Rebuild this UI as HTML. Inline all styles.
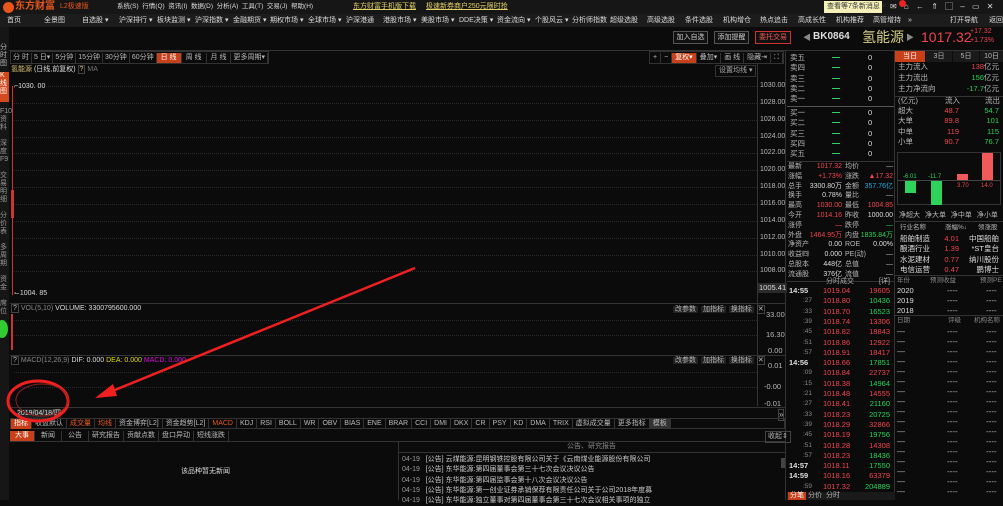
<!DOCTYPE html>
<html><head><meta charset="utf-8"><style>
*{margin:0;padding:0;box-sizing:border-box}
body{width:1003px;height:500px;overflow:hidden;background:#0b0b0b;font-family:"Liberation Sans","Noto Sans CJK SC",sans-serif;font-size:8px;color:#b8b8b8;position:relative}
.a{position:absolute;white-space:nowrap;line-height:10px}
.r{color:#f0454f}.g{color:#27d35a}.w{color:#ddd}.y{color:#d8c070}
.hl{position:absolute;height:1px;background:#2c2c2c}
.vl{position:absolute;width:1px;background:#2c2c2c}
.btn{position:absolute;border:1px solid #555;color:#ccc;text-align:center;line-height:11px;font-size:8px;background:#111}
.dot{position:absolute;height:0;border-top:1px dotted #2a2a2a}
.tab{display:inline-block;border-right:1px solid #333;padding:0 3px;line-height:10px;height:10px;color:#bbb}
.nv{position:absolute;top:16px;font-size:7px;line-height:10px;color:#ddd;white-space:nowrap}
</style></head><body>
<!-- title bar -->
<div class="a" style="left:0;top:0;width:1003px;height:14px;background:#161616"></div>
<div class="a" style="left:3px;top:2px;width:11px;height:11px;border-radius:50%;background:#e8561c"></div>
<div class="a" style="left:15px;top:1px;font-size:10px;font-weight:bold;color:#e8561c;line-height:12px">东方财富</div>
<div class="a" style="left:60px;top:2px;font-size:7px;color:#e8561c">L2极速版</div>
<div class="a w" style="left:117px;top:2px;font-size:6.5px">系统(S)&nbsp; 行情(Q)&nbsp; 资讯(I)&nbsp; 数据(D)&nbsp; 分析(A)&nbsp; 工具(T)&nbsp; 交易(J)&nbsp; 帮助(H)</div>
<div class="a" style="left:353px;top:2px;font-size:7px;color:#e6d36a;text-decoration:underline">东方财富手机版下载</div>
<div class="a" style="left:426px;top:2px;font-size:7px;color:#e6d36a;text-decoration:underline">极速新券商户250元限时抢</div>
<div class="a" style="left:824px;top:1px;width:58px;height:12px;background:#f4f0b8;color:#333;padding-left:3px;line-height:12px;font-size:7px">查看等7条新消息 ×</div>
<div class="a w" style="left:890px;top:2px;word-spacing:5px">✉ ⌂ ← ⇑ ▢ – ▭ ✕</div>
<div class="a" style="left:899px;top:0;width:7px;height:7px;border-radius:50%;background:#e22"></div>
<!-- nav -->
<div class="a" style="left:0;top:14px;width:1003px;height:13px;background:#1c1c1c"></div>
<div class="nv" style="left:7px">首页</div><div class="nv" style="left:44px">全景图</div><div class="nv" style="left:82px">自选股 ▾</div><div class="nv" style="left:119px">沪深排行 ▾</div><div class="nv" style="left:157px">板块监测 ▾</div><div class="nv" style="left:195px">沪深指数 ▾</div><div class="nv" style="left:233px">金融期货 ▾</div><div class="nv" style="left:270px">期权市场 ▾</div><div class="nv" style="left:308px">全球市场 ▾</div><div class="nv" style="left:346px">沪深港通</div><div class="nv" style="left:383px">港股市场 ▾</div><div class="nv" style="left:421px">美股市场 ▾</div><div class="nv" style="left:459px">DDE决策 ▾</div><div class="nv" style="left:497px">资金流向 ▾</div><div class="nv" style="left:535px">个股风云 ▾</div><div class="nv" style="left:572px">分析师指数</div><div class="nv" style="left:610px">超级选股</div><div class="nv" style="left:647px">高级选股</div><div class="nv" style="left:685px">条件选股</div><div class="nv" style="left:723px">机构增仓</div><div class="nv" style="left:760px">热点追击</div><div class="nv" style="left:798px">高成长性</div><div class="nv" style="left:836px">机构推荐</div><div class="nv" style="left:873px">高管增持</div><div class="nv" style="left:908px">»</div><div class="nv" style="left:950px">打开导航</div><div class="nv" style="left:989px">返回</div>
<!-- toolbar -->
<div class="btn" style="left:673px;top:31px;width:35px;height:13px;font-size:7px">加入自选</div>
<div class="btn" style="left:714px;top:31px;width:35px;height:13px;font-size:7px">添加提醒</div>
<div class="btn" style="left:755px;top:31px;width:36px;height:13px;border-color:#c33;color:#e55;font-size:7px">委托交易</div>
<div class="a" style="left:803px;top:33px;color:#888">◀</div>
<div class="a w" style="left:813px;top:32px;font-size:10px;font-weight:bold">BK0864</div>
<div class="a" style="left:862px;top:29px;font-size:14px;line-height:16px;color:#d8d08a">氢能源</div>
<div class="a" style="left:906px;top:33px;color:#888">▶</div>
<div class="a r" style="left:921px;top:29px;font-size:14px;line-height:16px">1017.32</div>
<div class="a r" style="left:970px;top:27px;font-size:7px;line-height:9px">+17.32<br>+1.73%</div>
<div class="hl" style="left:0;top:50px;width:1003px;background:#333"></div>
<!-- left sidebar -->
<div class="a" style="left:0;top:27px;width:9px;height:473px;background:#161616"></div>
<div class="a" style="left:0;top:44px;font-size:7px;line-height:8px;width:9px;white-space:normal">分时图</div>
<div class="a" style="left:0;top:72px;width:9px;height:30px;background:#d24a1c;color:#fff;font-size:7px;line-height:8px;white-space:normal">K线图</div>
<div class="a" style="left:0;top:108px;font-size:7px;line-height:8px;width:9px;white-space:normal;color:#999">F10资料<br><br>深度F9<br><br>交易明细<br><br>分价表<br><br>多周期<br><br>资金<br><br>席位</div>
<div class="a" style="left:-4px;top:320px;width:12px;height:18px;border-radius:50%;background:#3c3"></div>
<!-- period bar -->
<div class="a" style="left:10px;top:51px;height:13px;border:1px solid #333;font-size:7px;line-height:11px">
<span class="tab" style="padding:0 2px">分 时</span><span class="tab" style="padding:0 2px">5 日▾</span><span class="tab" style="padding:0 2px">5分钟</span><span class="tab" style="padding:0 2px">15分钟</span><span class="tab" style="padding:0 2px">30分钟</span><span class="tab" style="padding:0 2px">60分钟</span><span class="tab" style="background:#c8401a;color:#fff;padding:0 4px">日 线</span><span class="tab" style="padding:0 4px">周 线</span><span class="tab" style="padding:0 4px">月 线</span><span class="tab" style="padding:0 2px">更多周期▾</span></div>
<div class="a" style="left:649px;top:51px;height:13px;border:1px solid #333;line-height:11px;font-size:7px"><span class="tab">+</span><span class="tab">−</span><span class="tab" style="background:#c8401a;color:#fff">复权▾</span><span class="tab">叠加▾</span><span class="tab">画 线</span><span class="tab">隐藏⇥</span><span class="tab">⛶</span></div>
<div class="a y" style="left:11px;top:65px;font-size:7px">氢能源 <span class="w">(日线,前复权)</span> <span style="border:1px solid #444;padding:0 1px">?</span> <span style="color:#777">MA</span></div>
<div class="a" style="left:715px;top:65px;border:1px solid #333;padding:0 3px;color:#aaa;font-size:7px">设置均线 ▾</div>
<!-- main chart -->
<div class="vl" style="left:757px;top:64px;height:342px;background:#333"></div>
<div class="vl" style="left:785px;top:50px;height:450px;background:#333"></div>
<div id="grid"></div>
<div class="a" style="left:12px;top:86px;width:1px;height:209px;background:#c33"></div>
<div class="a" style="left:11px;top:190px;width:3px;height:28px;border:1px solid #c33"></div>
<div class="a w" style="left:14px;top:82px;font-size:7px">⌐1030. 00</div>
<div class="a w" style="left:14px;top:289px;font-size:7px">⌙1004. 85</div>
<div class="a" style="left:758px;top:283px;background:#2a2a2a;color:#ddd;padding:0 1px;font-size:7.5px">1005.41</div>
<div class="hl" style="left:10px;top:303px;width:775px;background:#333"></div>
<div class="a" style="left:11px;top:304px;font-size:7px"><span style="border:1px solid #444;padding:0 1px">?</span> <span style="color:#888">VOL(5,10)</span> <span class="w">VOLUME: 3300795600.000</span></div>
<div class="a" style="left:11px;top:314px;width:2px;height:36px;border:1px solid #c33"></div>
<div class="a" style="left:673px;top:305px;word-spacing:1px;font-size:7px"><span style="background:#222;padding:0 2px">改参数</span> <span style="background:#222;padding:0 2px">加指标</span> <span style="background:#222;padding:0 2px">换指标</span> <span style="border:1px solid #444">✕</span></div>
<div class="a" style="left:766px;top:310px;font-size:7.5px">33.00</div><div class="a" style="left:766px;top:330px;font-size:7.5px">16.30</div><div class="a" style="left:768px;top:346px;font-size:7.5px">0.00</div>
<div class="hl" style="left:10px;top:355px;width:775px;background:#333"></div>
<div class="a" style="left:11px;top:356px;font-size:7px"><span style="border:1px solid #444;padding:0 1px">?</span> <span style="color:#888">MACD(12,26,9)</span> <span class="w">DIF: 0.000</span> <span style="color:#dd0">DEA: 0.000</span> <span style="color:#d0d">MACD: 0.000</span></div>
<div class="a" style="left:673px;top:356px;word-spacing:1px;font-size:7px"><span style="background:#222;padding:0 2px">改参数</span> <span style="background:#222;padding:0 2px">加指标</span> <span style="background:#222;padding:0 2px">换指标</span> <span style="border:1px solid #444">✕</span></div>
<div class="a" style="left:768px;top:361px;font-size:7.5px">0.01</div><div class="a" style="left:764px;top:382px;font-size:7.5px">-0.00</div><div class="a" style="left:764px;top:399px;font-size:7.5px">-0.01</div>
<div class="hl" style="left:10px;top:407px;width:775px;background:#333"></div>
<div class="a w" style="left:17px;top:409px;background:#222;font-size:7px">2019/04/18/四</div>
<div class="a" style="left:778px;top:409px;border:1px solid #444">»</div>
<!-- indicator tabs -->
<div class="a" style="left:10px;top:418px;width:775px;height:11px;border:1px solid #333;line-height:9px;font-size:7px">
<span class="tab" style="background:#c8401a;color:#fff">指标</span><span class="tab">收盘默认</span><span class="tab" style="color:#e55a1a">成交量</span><span class="tab" style="color:#e55a1a">均线</span><span class="tab">资金博弈[L2]</span><span class="tab">资金趋势[L2]</span><span class="tab" style="color:#e55a1a">MACD</span><span class="tab">KDJ</span><span class="tab">RSI</span><span class="tab">BOLL</span><span class="tab">WR</span><span class="tab">OBV</span><span class="tab">BIAS</span><span class="tab">ENE</span><span class="tab">BRAR</span><span class="tab">CCI</span><span class="tab">DMI</span><span class="tab">DKX</span><span class="tab">CR</span><span class="tab">PSY</span><span class="tab">KD</span><span class="tab">DMA</span><span class="tab">TRIX</span><span class="tab">虚拟成交量</span><span class="tab">更多指标</span><span class="tab" style="background:#333">模板</span></div>
<!-- news -->
<div class="a" style="left:10px;top:430px;height:12px;line-height:11px;border-bottom:1px solid #333;width:775px;font-size:7px">
<span class="tab" style="background:#c8401a;color:#fff;padding:0 5px">大事</span><span class="tab" style="padding:0 6px">新闻</span><span class="tab" style="padding:0 6px">公告</span><span class="tab">研究报告</span><span class="tab">贡献点数</span><span class="tab">盘口异动</span><span class="tab">短线涨跌</span></div>
<div class="a" style="left:765px;top:431px;border:1px solid #444;padding:0 2px;font-size:7px">收起⇕</div>
<div class="a w" style="left:181px;top:467px;font-size:7px">该品种暂无新闻</div>
<div class="vl" style="left:398px;top:442px;height:58px;background:#333"></div>
<div class="a" style="left:567px;top:442px;color:#888;font-size:7px">公告、研究报告</div>
<div class="hl" style="left:398px;top:452px;width:387px;background:#333"></div>
<div class="a" style="left:402px;top:455px;line-height:10.3px;color:#ccc;font-size:7px"><span style="color:#999">04-19</span>&nbsp;&nbsp; [公告] 云煤能源:昆明钢铁控股有限公司关于《云南煤业能源股份有限公司<br><span style="color:#999">04-19</span>&nbsp;&nbsp; [公告] 东华能源:第四届董事会第三十七次会议决议公告<br><span style="color:#999">04-19</span>&nbsp;&nbsp; [公告] 东华能源:第四届监事会第十八次会议决议公告<br><span style="color:#999">04-19</span>&nbsp;&nbsp; [公告] 东华能源:第一创业证券承销保荐有限责任公司关于公司2018年度募<br><span style="color:#999">04-19</span>&nbsp;&nbsp; [公告] 东华能源:独立董事对第四届董事会第三十七次会议相关事项的独立</div>
<div class="a" style="left:781px;top:458px;width:4px;height:10px;background:#444"></div>
<!-- quote panel -->
<div class="vl" style="left:894px;top:50px;height:450px;background:#333"></div>
<div id="q"></div>
<div class="hl" style="left:787px;top:106px;width:107px;background:#555"></div>
<div class="hl" style="left:787px;top:161px;width:107px;background:#333"></div>
<div class="hl" style="left:787px;top:281px;width:107px;background:#333"></div>
<div class="a" style="left:826px;top:277px;color:#aaa;font-size:7px">分时成交</div><div class="a" style="left:879px;top:277px;font-size:7px">[详]</div>
<div class="a" style="left:787px;top:492px;width:108px;height:8px;background:#1a1a1a"></div>
<div class="a" style="left:788px;top:492px;background:#c8401a;color:#fff;padding:0 2px;line-height:8px;font-size:7px">分笔</div><div class="a" style="left:808px;top:492px;line-height:8px;font-size:7px">分价</div><div class="a" style="left:826px;top:492px;line-height:8px;font-size:7px">分时</div>
<!-- right panel -->
<div class="a" style="left:895px;top:51px;width:108px;height:11px;line-height:11px;text-align:center;font-size:7px">
<span style="position:absolute;left:0;width:30px;background:#c8401a;color:#fff">当日</span><span style="position:absolute;left:31px;width:26px;background:#1a1a1a">3日</span><span style="position:absolute;left:58px;width:26px;background:#1a1a1a">5日</span><span style="position:absolute;left:85px;width:23px;background:#1a1a1a">10日</span></div>
<div id="rp"></div>
<div class="a" style="left:897px;top:152px;width:104px;height:53px;border:1px solid #333"></div>
<div class="hl" style="left:898px;top:180px;width:102px;background:#444"></div>
<div class="a" style="left:905px;top:181px;width:11px;height:12px;background:#2dd35a"></div>
<div class="a" style="left:931px;top:181px;width:11px;height:24px;background:#2dd35a"></div>
<div class="a" style="left:957px;top:174px;width:11px;height:6px;background:#f25a5a"></div>
<div class="a" style="left:982px;top:153px;width:11px;height:27px;background:#f25a5a"></div>
<div class="a" style="left:903px;top:172px;font-size:6px;color:#2dd35a">-6.01</div><div class="a" style="left:928px;top:172px;font-size:6px;color:#2dd35a">-11.7</div><div class="a r" style="left:957px;top:181px;font-size:6px">3.70</div><div class="a r" style="left:981px;top:181px;font-size:6px">14.0</div>
<div class="a" style="left:899px;top:211px;font-size:7px;word-spacing:3px">净超大 净大单 净中单 净小单</div>
<!-- arrow & circle -->
<svg class="a" style="left:0;top:0" width="1003" height="500"><line x1="415" y1="268" x2="105" y2="394" stroke="#f02020" stroke-width="2.5"/><polygon points="95,398 113,384 117,396" fill="#f02020"/><ellipse cx="38" cy="401" rx="30" ry="20" fill="none" stroke="#f02020" stroke-width="3"/><ellipse cx="42" cy="400" rx="26" ry="16" fill="none" stroke="#902020" stroke-width="1"/></svg>
<script>
var h='';
for(var i=0;i<12;i++){var y=81+i*16.85;h+='<div class="dot" style="left:14px;top:'+(y+5)+'px;width:743px"></div><div class="a" style="left:760px;top:'+y+'px;font-size:7px">'+(1030-i*2)+'.00</div>';}
[320,335,372,387].forEach(function(y){h+='<div class="dot" style="left:14px;top:'+y+'px;width:743px"></div>'});
document.getElementById('grid').innerHTML=h;
h='';
var S='font-size:7.5px;';
['卖五','卖四','卖三','卖二','卖一'].forEach(function(t,i){var y=53+i*10.3;h+='<div class="a" style="'+S+'left:790px;top:'+y+'px">'+t+'</div><div class="a" style="left:832px;top:'+(y+4)+'px;width:8px;height:1px;background:#2dd35a"></div><div class="a w" style="'+S+'left:868px;top:'+y+'px">0</div>'});
['买一','买二','买三','买四','买五'].forEach(function(t,i){var y=108+i*10.3;h+='<div class="a" style="'+S+'left:790px;top:'+y+'px">'+t+'</div><div class="a" style="left:832px;top:'+(y+4)+'px;width:8px;height:1px;background:#2dd35a"></div><div class="a w" style="'+S+'left:868px;top:'+y+'px">0</div>'});
var st=[['最新','<span class="r">1017.32</span>','均价','—'],['涨幅','<span class="r">+1.73%</span>','涨跌','<span class="r">▲17.32</span>'],['总手','<span class="w">3300.80万</span>','金额','<span style="color:#2ad">357.76亿</span>'],['换手','<span class="w">0.78%</span>','量比','—'],['最高','<span class="r">1030.00</span>','最低','<span class="r">1004.85</span>'],['今开','<span class="r">1014.16</span>','昨收','<span class="w">1000.00</span>'],['涨停','<span class="r">—</span>','跌停','<span class="g">—</span>'],['外盘','<span class="r">1464.95万</span>','内盘','<span class="g">1835.84万</span>'],['净资产','<span class="w">0.00</span>','ROE','<span class="w">0.00%</span>'],['收益㈣','<span class="w">0.000</span>','PE(动)','—'],['总股本','<span class="w">448亿</span>','总值','—'],['流通股','<span class="w">376亿</span>','流值','—']];
st.forEach(function(r,i){var y=162+i*9.8;h+='<div class="a" style="font-size:7px;left:788px;top:'+y+'px">'+r[0]+'</div><div class="a" style="font-size:7px;right:161px;top:'+y+'px">'+r[1]+'</div><div class="a" style="font-size:7px;left:845px;top:'+y+'px">'+r[2]+'</div><div class="a" style="font-size:7px;right:110px;top:'+y+'px">'+r[3]+'</div>'});
var tr=[['14:55','1019.04','19605','r'],[':27','1018.80','10436','g'],[':33','1018.70','16523','g'],[':39','1018.74','13306','r'],[':45','1018.82','18843','r'],[':51','1018.86','12922','r'],[':57','1018.91','18417','r'],['14:56','1018.66','17851','g'],[':09','1018.84','22737','r'],[':15','1018.38','14964','g'],[':21','1018.48','14555','r'],[':27','1018.41','21160','g'],[':33','1018.23','20725','g'],[':39','1018.29','32866','r'],[':45','1018.19','19756','g'],[':51','1018.28','14308','r'],[':57','1018.23','18436','g'],['14:57','1018.11','17550','g'],['14:59','1018.16','63379','r'],[':59','1017.32','204889','g']];
tr.forEach(function(r,i){var y=286+i*10.3;var b=r[0].length>3;h+='<div class="a" style="left:'+(b?789:803)+'px;top:'+y+'px;'+(b?'color:#ddd;font-weight:bold;font-size:7.5px':'color:#888;font-size:6.5px')+'">'+r[0]+'</div><div class="a r" style="font-size:7.5px;left:823px;top:'+y+'px">'+r[1]+'</div><div class="a '+r[3]+'" style="font-size:7.5px;right:113px;top:'+y+'px">'+r[2]+'</div>'});
document.getElementById('q').innerHTML=h;
h='';
var T='font-size:7.5px;';
var rp=[[66,'主力流入','<span class="r">138</span>亿元'],[77,'主力流出','<span class="g">156</span>亿元'],[88,'主力净流向','<span class="g">-17.7</span>亿元']];
rp.forEach(function(r){h+='<div class="a" style="'+T+'left:898px;top:'+(r[0]-4)+'px">'+r[1]+'</div><div class="a" style="'+T+'right:4px;top:'+(r[0]-4)+'px">'+r[2]+'</div>'});
h+='<div class="hl" style="left:895px;top:96px;width:108px;background:#333"></div>';
h+='<div class="a" style="'+T+'left:898px;top:96px">(亿元)</div><div class="a" style="'+T+'left:945px;top:96px">流入</div><div class="a" style="'+T+'left:985px;top:96px">流出</div>';
[['超大','48.7','54.7'],['大单','89.8','101'],['中单','119','115'],['小单','90.7','76.7']].forEach(function(r,i){var y=106+i*10.3;h+='<div class="a" style="'+T+'left:898px;top:'+y+'px">'+r[0]+'</div><div class="a r" style="'+T+'right:44px;top:'+y+'px">'+r[1]+'</div><div class="a g" style="'+T+'right:4px;top:'+y+'px">'+r[2]+'</div>'});
h+='<div class="hl" style="left:895px;top:221px;width:108px;background:#333"></div>';
h+='<div class="a" style="left:900px;top:223px;font-size:6.5px">行业名称</div><div class="a" style="left:945px;top:223px;font-size:6.5px">涨幅%↓</div><div class="a" style="left:978px;top:223px;font-size:6.5px">领涨股</div>';
[['船舶制造','4.01','中国船舶'],['酿酒行业','1.39','*ST皇台'],['水泥建材','0.77','纳川股份'],['电信运营','0.47','鹏博士']].forEach(function(r,i){var y=234+i*10.3;h+='<div class="a w" style="'+T+'left:900px;top:'+y+'px">'+r[0]+'</div><div class="a r" style="'+T+'right:44px;top:'+y+'px">'+r[1]+'</div><div class="a w" style="'+T+'right:4px;top:'+y+'px">'+r[2]+'</div>'});
h+='<div class="hl" style="left:895px;top:275px;width:108px;background:#333"></div>';
h+='<div class="a" style="left:897px;top:276px;font-size:6.5px;color:#888">年份</div><div class="a" style="left:930px;top:276px;font-size:6.5px;color:#888">预测收益</div><div class="a" style="left:980px;top:276px;font-size:6.5px;color:#888">预测PE</div>';
['2020','2019','2018'].forEach(function(t,i){var y=286+i*10;h+='<div class="a w" style="'+T+'left:897px;top:'+y+'px">'+t+'</div><div class="a" style="left:947px;top:'+y+'px">----</div><div class="a" style="left:986px;top:'+y+'px">----</div>'});
h+='<div class="hl" style="left:895px;top:315px;width:108px;background:#333"></div>';
h+='<div class="a" style="left:897px;top:316px;font-size:6.5px;color:#888">日期</div><div class="a" style="left:948px;top:316px;font-size:6.5px;color:#888">评级</div><div class="a" style="left:974px;top:316px;font-size:6.5px;color:#888">机构名称</div>';
for(var i=0;i<17;i++){var y=327+i*10;h+='<div class="a" style="left:897px;top:'+y+'px">—</div><div class="a" style="left:947px;top:'+y+'px">----</div><div class="a" style="left:986px;top:'+y+'px">----</div>'}
document.getElementById('rp').innerHTML=h;
</script>
</body></html>
